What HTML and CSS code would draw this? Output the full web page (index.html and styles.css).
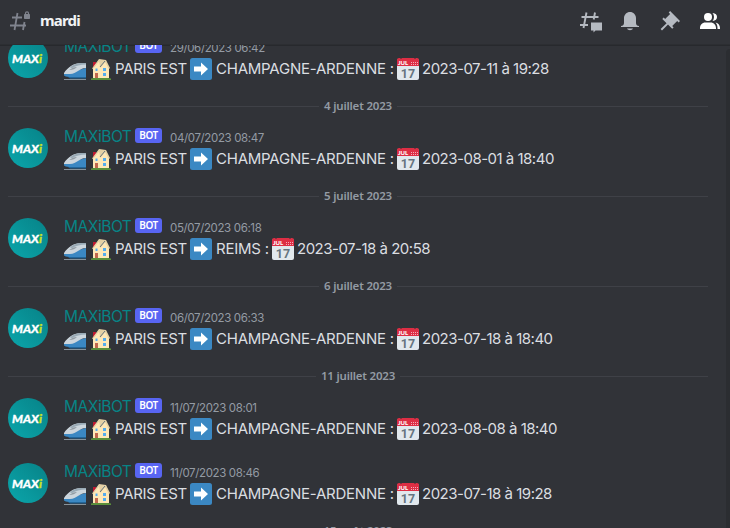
FILE: index.html
```html
<!DOCTYPE html>
<html lang="fr">
<head>
<meta charset="utf-8">
<title>mardi</title>
<link rel="stylesheet" href="styles.css">
</head>
<body>
<svg class="defs" width="0" height="0">
  <defs>
    <linearGradient id="av" x1="0" y1="1" x2="1" y2="0"><stop offset="0" stop-color="#0ba6ab"/><stop offset="1" stop-color="#078287"/></linearGradient>
    <symbol id="train" viewBox="0 0 22 22">
      <path d="M0 21h22v1H0z" fill="#87939b"/>
      <path d="M0 15.500L7 14l15-4v9H5q-4-.5-5-1.500z" fill="#3b88c3"/>
      <path d="M0 15C4 9 10 5 17 5h5v5c-7 0-9 6-16 6H0z" fill="#ccd6dd"/>
      <path d="M6 9.500C9 6.500 13 5 17 5h5v1.500C16 6.500 12 8 8 10z" fill="#99aab5"/>
      <path d="M5 12c3-2 5-3 8-3-2 2-4 3-8 3z" fill="#919ba2"/>
      <path d="M4 19h18v1.500H6z" fill="#226699"/>
    </symbol>
    <symbol id="house" viewBox="0 0 22 22">
      <path d="M1 20.500q10-2 20 0V22H1z" fill="#5c913b"/>
      <path d="M3 4h3v5H3z" fill="#be1931"/>
      <path d="M3 10l6-8 7 1 3 7v10H3z" fill="#ffe8b6"/>
      <path d="M2 10.500L9 1l7 1 4 8-1 1-4-7-4.500 6L9 3.500 3 11z" fill="#e5d1a5"/>
      <path d="M10 9l5-6" stroke="#66757f"/>
      <path d="M5 15h3v5H5z" fill="#c1694f"/>
      <path d="M5.500 10.500h2v2.500h-2zM13 10h3v3h-3zm0 5h3v3h-3z" fill="#55acee"/>
    </symbol>
    <symbol id="arrow" viewBox="0 0 22 22">
      <rect width="22" height="22" rx="2.500" fill="#3b88c3"/>
      <path d="M4 8.500h7V4.500l7 6.500-7 6.500v-4H4z" fill="#fff"/>
    </symbol>
    <symbol id="calendar" viewBox="0 0 22 22">
      <rect y="1" width="22" height="21" rx="2" fill="#e1e8ed"/>
      <path d="M0 8V2q0-2 2-2h1l1 1 1-1h12l1 1 1-1h1q2 0 2 2v6z" fill="#dd2e44"/>
      <text x="1" y="7" class="month">JUL</text>
      <path d="M14 4.500h7M14 6.500h7" stroke="#f4abba" stroke-width="1" stroke-dasharray="1 1"/>
      <text x="11" y="19.500" text-anchor="middle" class="day">17</text>
    </symbol>
    <symbol id="avatar" viewBox="0 0 40 40">
      <circle cx="20" cy="20" r="20" fill="url(#av)"/>
      <text x="4" y="24.500" class="logo" textLength="27" lengthAdjust="spacingAndGlyphs">MAX</text>
      <text x="31" y="24.500" class="logo logo-i">i</text>
    </symbol>
  </defs>
</svg>
<header class="bar">
  <svg class="hash" width="24" height="24" viewBox="0 0 24 24" fill="none" stroke="#80848e" stroke-width="1.800">
    <path d="M9.500 4L6.500 21M16.500 13L15 21M4 8.500h10M2 16.500h16"/>
    <rect x="16" y="5" width="6" height="5" rx=".7" fill="#80848e" stroke="none"/><path d="M17.500 6V4.300a1.500 1.500 0 013 0V6" stroke-width="1.200"/>
  </svg>
  <h1>mardi</h1>
  <nav class="tools">
    <svg width="24" height="24" viewBox="0 0 24 24"><path d="M8.500 3.500L5.500 19M17 3.500l-1.300 7M3.500 8h17M2 16h8" fill="none" stroke="#b5bac1" stroke-width="1.900"/><path d="M13 13.500h11v8h-6.500l-2 2v-2H13z" fill="#b5bac1"/></svg>
    <svg width="24" height="24" viewBox="0 0 24 24" fill="#b5bac1"><path d="M18 9v5c0 1.700 1.300 3 3 3v1H3v-1c1.700 0 3-1.300 3-3V9c0-3.300 2.700-6 6-6s6 2.700 6 6zM9 19.500h6c-.5 1-1.700 1.700-3 1.700s-2.500-.7-3-1.700z"/></svg>
    <svg width="24" height="24" viewBox="0 0 24 24" fill="#b5bac1"><path d="M22 12l-9.900-9.900-1.400 1.500 1.400 1.400-5 4.900-1.400-1.400-1.400 1.400 4.300 4.300-6 5.900 1.400 1.400 6-5.900 4.200 4.200 1.400-1.400-1.400-1.400 5-5 1.400 1.400z"/></svg>
    <svg width="24" height="24" viewBox="0 0 24 24" fill="#fff"><circle cx="10" cy="8" r="4"/><path d="M2 20v-1c0-3 2-5.500 5.500-5.500h5C16 13.500 18 16 18 19v1zM14.500 4c3.200.3 4.500 2 4.500 4s-1.300 3.800-4.500 4c2-2 2-6 0-8zM17.500 13.500c3 .6 4.500 3 4.500 5.500v1h-2.500v-1c0-2-.5-4-2-5.500z"/></svg>
  </nav>
</header>
<main class="chat">
  <div class="feed">
    <article class="msg"><svg class="avatar"><use href="#avatar"/></svg><div class="content">
      <div class="meta"><b class="name">MAXiBOT</b><span class="bot">BOT</span><time>29/06/2023 06:42</time></div>
      <div class="line"><svg class="emoji"><use href="#train"/></svg><svg class="emoji house"><use href="#house"/></svg><span class="from">PARIS EST</span><svg class="emoji"><use href="#arrow"/></svg><span class="to">CHAMPAGNE-ARDENNE :</span><svg class="emoji"><use href="#calendar"/></svg><span class="when">2023-07-11 à 19:28</span></div>
    </div></article>
    <div class="divider"><span>4 juillet 2023</span></div>
    <article class="msg"><svg class="avatar"><use href="#avatar"/></svg><div class="content">
      <div class="meta"><b class="name">MAXiBOT</b><span class="bot">BOT</span><time>04/07/2023 08:47</time></div>
      <div class="line"><svg class="emoji"><use href="#train"/></svg><svg class="emoji house"><use href="#house"/></svg><span class="from">PARIS EST</span><svg class="emoji"><use href="#arrow"/></svg><span class="to">CHAMPAGNE-ARDENNE :</span><svg class="emoji"><use href="#calendar"/></svg><span class="when">2023-08-01 à 18:40</span></div>
    </div></article>
    <div class="divider"><span>5 juillet 2023</span></div>
    <article class="msg"><svg class="avatar"><use href="#avatar"/></svg><div class="content">
      <div class="meta"><b class="name">MAXiBOT</b><span class="bot">BOT</span><time>05/07/2023 06:18</time></div>
      <div class="line"><svg class="emoji"><use href="#train"/></svg><svg class="emoji house"><use href="#house"/></svg><span class="from">PARIS EST</span><svg class="emoji"><use href="#arrow"/></svg><span class="to short">REIMS :</span><svg class="emoji"><use href="#calendar"/></svg><span class="when">2023-07-18 à 20:58</span></div>
    </div></article>
    <div class="divider"><span>6 juillet 2023</span></div>
    <article class="msg"><svg class="avatar"><use href="#avatar"/></svg><div class="content">
      <div class="meta"><b class="name">MAXiBOT</b><span class="bot">BOT</span><time>06/07/2023 06:33</time></div>
      <div class="line"><svg class="emoji"><use href="#train"/></svg><svg class="emoji house"><use href="#house"/></svg><span class="from">PARIS EST</span><svg class="emoji"><use href="#arrow"/></svg><span class="to">CHAMPAGNE-ARDENNE :</span><svg class="emoji"><use href="#calendar"/></svg><span class="when">2023-07-18 à 18:40</span></div>
    </div></article>
    <div class="divider"><span>11 juillet 2023</span></div>
    <article class="msg"><svg class="avatar"><use href="#avatar"/></svg><div class="content">
      <div class="meta"><b class="name">MAXiBOT</b><span class="bot">BOT</span><time>11/07/2023 08:01</time></div>
      <div class="line"><svg class="emoji"><use href="#train"/></svg><svg class="emoji house"><use href="#house"/></svg><span class="from">PARIS EST</span><svg class="emoji"><use href="#arrow"/></svg><span class="to">CHAMPAGNE-ARDENNE :</span><svg class="emoji"><use href="#calendar"/></svg><span class="when">2023-08-08 à 18:40</span></div>
    </div></article>
    <article class="msg"><svg class="avatar"><use href="#avatar"/></svg><div class="content">
      <div class="meta"><b class="name">MAXiBOT</b><span class="bot">BOT</span><time>11/07/2023 08:46</time></div>
      <div class="line"><svg class="emoji"><use href="#train"/></svg><svg class="emoji house"><use href="#house"/></svg><span class="from">PARIS EST</span><svg class="emoji"><use href="#arrow"/></svg><span class="to">CHAMPAGNE-ARDENNE :</span><svg class="emoji"><use href="#calendar"/></svg><span class="when">2023-07-18 à 19:28</span></div>
    </div></article>
    <div class="divider"><span>15 août 2023</span></div>
  </div>
  <div class="scrollbar"></div>
</main>
</body>
</html>
```
FILE: styles.css
```css
* { box-sizing: border-box; }
body {
  margin: 0;
  height: 528px;
  display: flex;
  flex-direction: column;
  overflow: hidden;
  background: #313338;
  color: #dbdee1;
  font-family: Inter, "Noto Sans", sans-serif;
}
.defs { position: absolute; }
.bar {
  height: 45px;
  flex: none;
  display: flex;
  align-items: center;
  padding: 0 8px 3px;
  border-bottom: 1px solid #2c2e32;
  box-shadow: 0 1px 0 #27292d;
}
.hash { margin-right: 8px; }
h1 {
  margin: 0 0 2px;
  color: #f2f3f5;
  font: 700 15px/20px "Noto Sans", sans-serif;
  letter-spacing: -.8px;
}
.tools { margin-left: auto; display: flex; gap: 16px; }
.chat { flex: 1; min-height: 0; display: flex; overflow: hidden; }
.feed { flex: 1; margin-top: -17px; }
.scrollbar { width: 4px; margin-top: 4px; background: #2b2d31; border-radius: 4px 0 0 0; }
.msg { height: 65px; display: flex; padding: 10px 0 0 8px; }
.avatar { width: 40px; height: 40px; margin-right: 16px; }
.logo { font: italic 900 12px "Lato", sans-serif; fill: #fff; stroke: #fff; stroke-width: .3px; }
.logo-i { fill: #c8e51b; stroke: #c8e51b; }
.meta { display: flex; height: 20px; }
.name { width: 71px; color: #078486; font-size: 15.5px; line-height: 17px; font-weight: 400; letter-spacing: -.45px; }
.bot {
  width: 27px;
  height: 15px;
  margin-right: 8px;
  border-radius: 3px;
  background: #5865f2;
  color: #fff;
  font: 600 10px/15px "Noto Sans", sans-serif;
  letter-spacing: -.5px;
  text-align: center;
}
time { color: #949ba4; font-size: 11.5px; line-height: 20px; letter-spacing: -.36px; }
.line { display: flex; height: 22px; font-size: 15px; line-height: 22px; white-space: nowrap; }
.emoji { width: 22px; height: 22px; flex: none; }
.house { margin: 0 2px 0 4px; }
.from { width: 76px; padding-left: 1px; letter-spacing: -.3px; }
.to { width: 185px; padding-left: 4px; letter-spacing: -.23px; }
.short { width: 60px; }
.when { padding-left: 3px; letter-spacing: -.5px; }
.divider {
  height: 25px;
  width: 700px;
  margin-left: 8px;
  padding-top: 1px;
  display: flex;
  align-items: center;
  color: #949ba4;
  font: 600 11.500px/14px "Noto Sans", sans-serif;
  letter-spacing: -.2px;
}
.divider::before, .divider::after { content: ""; flex: 1; height: 1px; background: #3f4147; }
.divider span { padding: 0 5px; }
.month { font: 900 6px Lato, sans-serif; fill: #fff; }
.day { font: 700 12.5px Roboto, sans-serif; fill: #66757f; }
```
